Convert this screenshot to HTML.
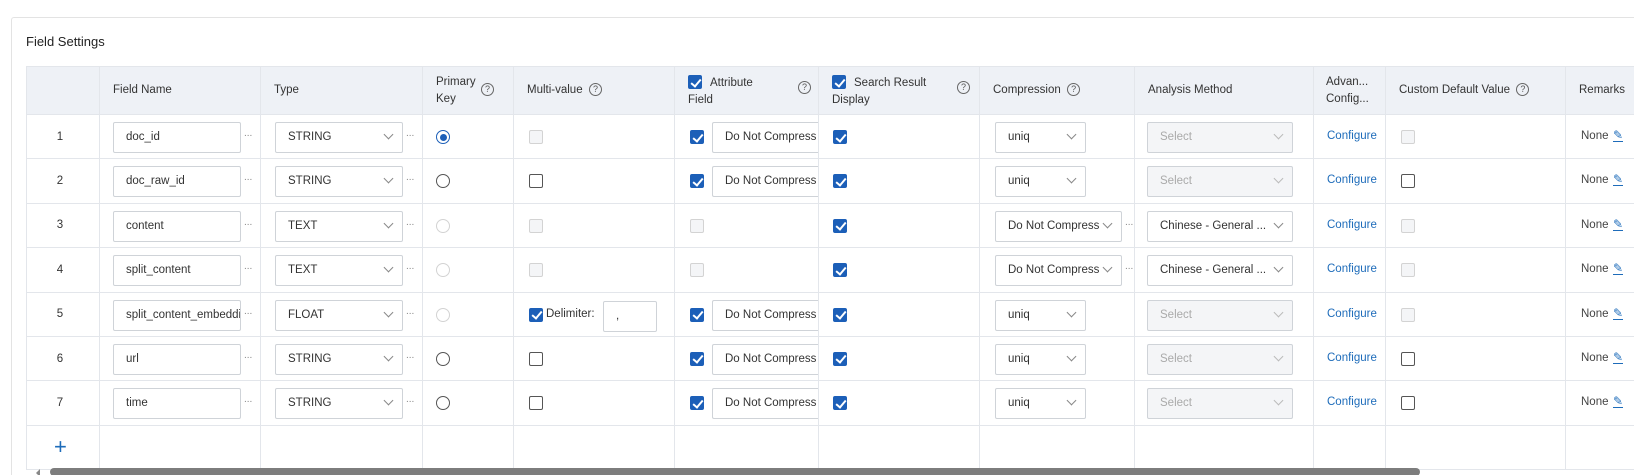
<!DOCTYPE html>
<html style="width:1634px;height:475px;overflow:hidden"><head><meta charset="utf-8"><style>
*{box-sizing:border-box;margin:0;padding:0}
body{width:1634px;height:475px;overflow:hidden;background:#fff;font-family:"Liberation Sans",sans-serif;font-size:11.5px;color:#333;position:relative}
.card{position:absolute;left:11px;top:17px;width:1640px;height:458px;border:1px solid #e3e3e3;border-bottom:none;border-radius:3px 0 0 0}
.title{position:absolute;left:26px;top:34px;font-size:13px;color:#222}
table{position:absolute;left:26px;top:66px;border-collapse:collapse;table-layout:fixed;width:1620px}
td,th{border:1px solid #e3e6eb;padding:0;position:relative;vertical-align:middle;font-weight:normal;text-align:left;overflow:hidden}
th{background:#eef1f6;height:48px;padding-left:13px;line-height:17px;color:#333}
td{height:44.4px}
.n{text-align:center;padding-right:6px}
.inp{position:absolute;top:7px;height:31px;border:1px solid #cfd3d8;border-radius:2px;background:#fff;padding-left:12px;line-height:29px;white-space:nowrap;overflow:hidden}
.dis{background:#f4f5f7;color:#aaa}
.chev{position:absolute;right:10px;top:8px;width:7px;height:7px;border-right:1px solid #888;border-bottom:1px solid #888;transform:rotate(45deg)}
.dis .chev{border-color:#bbb}
.dots{position:absolute;top:13px;color:#888;font-size:10px}
.cb{position:absolute;top:15px;width:14px;height:14px;border:1px solid #555;border-radius:2px;background:#fff}
.cb.d{border-color:#d3d3d3;background:#f4f5f7}
.cb.c{background:#1c5fb8;border-color:#1c5fb8}
.cb.c:after{content:"";position:absolute;left:3.5px;top:0.5px;width:4px;height:8px;border-right:2px solid #fff;border-bottom:2px solid #fff;transform:rotate(40deg)}
.rd{position:absolute;top:15px;width:14px;height:14px;border:1px solid #555;border-radius:50%}
.rd.d{border-color:#d3d3d3}
.rd.c{border-color:#1c5fb8}
.rd.c:after{content:"";position:absolute;left:2.5px;top:2.5px;width:7px;height:7px;border-radius:50%;background:#1c5fb8}
.q{display:inline-block;width:13px;height:13px;border:1px solid #666;border-radius:50%;font-size:9px;line-height:11px;text-align:center;color:#555;vertical-align:middle}
.lnk{position:absolute;left:13px;top:15px;color:#1e6cba}
.none{position:absolute;left:15px;top:15px;color:#444}
.pen{position:absolute;left:47px;top:14px;color:#1e6cba;font-size:12px;border-bottom:1px solid #1e6cba;line-height:12px}
.hcb{position:relative;display:inline-block;top:3px;margin-right:8px;width:14px;height:14px}
.ai{left:37px;width:110px;border-right:none}
</style></head><body>
<div class="card"></div>
<div class="title">Field Settings</div>
<table>
<colgroup><col style="width:73px"><col style="width:161px"><col style="width:162px"><col style="width:91px"><col style="width:161px"><col style="width:144px"><col style="width:161px"><col style="width:155px"><col style="width:179px"><col style="width:72px"><col style="width:180px"><col style="width:81px"></colgroup>
<tr><th></th><th>Field Name</th><th>Type</th>
<th><div style="position:relative">Primary<br>Key<span class="q" style="position:absolute;left:45px;top:9px">?</span></div></th>
<th>Multi-value &nbsp;<span class="q">?</span></th>
<th><div style="position:relative"><span class="cb c hcb"></span>Attribute<br>Field<span class="q" style="position:absolute;left:110px;top:9px">?</span></div></th>
<th><div style="position:relative"><span class="cb c hcb"></span>Search Result<br>Display<span class="q" style="position:absolute;left:125px;top:9px">?</span></div></th>
<th>Compression &nbsp;<span class="q">?</span></th>
<th>Analysis Method</th>
<th style="padding-left:12px">Advan...<br>Config...</th>
<th>Custom Default Value &nbsp;<span class="q">?</span></th>
<th>Remarks</th></tr>

<tr><td class="n">1</td><td><div class="inp" style="left:13px;width:128px">doc_id</div><span class="dots" style="left:144px">...</span></td><td><div class="inp" style="left:14px;width:128px">STRING<i class="chev"></i></div><span class="dots" style="left:145px">...</span></td><td><span class="rd c" style="left:13px"></span></td><td><span class="cb d" style="left:15px"></span></td><td><span class="cb c" style="left:15px"></span><div class="inp ai">Do Not Compress</div></td><td><span class="cb c" style="left:14px"></span></td><td><div class="inp" style="left:15px;width:91px">uniq<i class="chev"></i></div></td><td><div class="inp dis" style="left:12px;width:146px">Select<i class="chev"></i></div></td><td><span class="lnk">Configure</span></td><td><span class="cb d" style="left:15px"></span></td><td><span class="none">None</span><span class="pen">✎</span></td></tr>

<tr><td class="n">2</td><td><div class="inp" style="left:13px;width:128px">doc_raw_id</div><span class="dots" style="left:144px">...</span></td><td><div class="inp" style="left:14px;width:128px">STRING<i class="chev"></i></div><span class="dots" style="left:145px">...</span></td><td><span class="rd" style="left:13px"></span></td><td><span class="cb" style="left:15px"></span></td><td><span class="cb c" style="left:15px"></span><div class="inp ai">Do Not Compress</div></td><td><span class="cb c" style="left:14px"></span></td><td><div class="inp" style="left:15px;width:91px">uniq<i class="chev"></i></div></td><td><div class="inp dis" style="left:12px;width:146px">Select<i class="chev"></i></div></td><td><span class="lnk">Configure</span></td><td><span class="cb" style="left:15px"></span></td><td><span class="none">None</span><span class="pen">✎</span></td></tr>

<tr><td class="n">3</td><td><div class="inp" style="left:13px;width:128px">content</div><span class="dots" style="left:144px">...</span></td><td><div class="inp" style="left:14px;width:128px">TEXT<i class="chev"></i></div><span class="dots" style="left:145px">...</span></td><td><span class="rd d" style="left:13px"></span></td><td><span class="cb d" style="left:15px"></span></td><td><span class="cb d" style="left:15px"></span></td><td><span class="cb c" style="left:14px"></span></td><td><div class="inp" style="left:15px;width:127px">Do Not Compress<i class="chev"></i></div><span class="dots" style="left:145px">...</span></td><td><div class="inp" style="left:12px;width:146px">Chinese - General ...<i class="chev"></i></div></td><td><span class="lnk">Configure</span></td><td><span class="cb d" style="left:15px"></span></td><td><span class="none">None</span><span class="pen">✎</span></td></tr>

<tr><td class="n">4</td><td><div class="inp" style="left:13px;width:128px">split_content</div><span class="dots" style="left:144px">...</span></td><td><div class="inp" style="left:14px;width:128px">TEXT<i class="chev"></i></div><span class="dots" style="left:145px">...</span></td><td><span class="rd d" style="left:13px"></span></td><td><span class="cb d" style="left:15px"></span></td><td><span class="cb d" style="left:15px"></span></td><td><span class="cb c" style="left:14px"></span></td><td><div class="inp" style="left:15px;width:127px">Do Not Compress<i class="chev"></i></div><span class="dots" style="left:145px">...</span></td><td><div class="inp" style="left:12px;width:146px">Chinese - General ...<i class="chev"></i></div></td><td><span class="lnk">Configure</span></td><td><span class="cb d" style="left:15px"></span></td><td><span class="none">None</span><span class="pen">✎</span></td></tr>

<tr><td class="n">5</td><td><div class="inp" style="left:13px;width:128px">split_content_embedding</div><span class="dots" style="left:144px">...</span></td><td><div class="inp" style="left:14px;width:128px">FLOAT<i class="chev"></i></div><span class="dots" style="left:145px">...</span></td><td><span class="rd d" style="left:13px"></span></td><td><span class="cb c" style="left:15px"></span><span style="position:absolute;left:32px;top:15px">Delimiter:</span><div class="inp" style="left:89px;width:54px;top:8px">,</div></td><td><span class="cb c" style="left:15px"></span><div class="inp ai">Do Not Compress</div></td><td><span class="cb c" style="left:14px"></span></td><td><div class="inp" style="left:15px;width:91px">uniq<i class="chev"></i></div></td><td><div class="inp dis" style="left:12px;width:146px">Select<i class="chev"></i></div></td><td><span class="lnk">Configure</span></td><td><span class="cb d" style="left:15px"></span></td><td><span class="none">None</span><span class="pen">✎</span></td></tr>

<tr><td class="n">6</td><td><div class="inp" style="left:13px;width:128px">url</div><span class="dots" style="left:144px">...</span></td><td><div class="inp" style="left:14px;width:128px">STRING<i class="chev"></i></div><span class="dots" style="left:145px">...</span></td><td><span class="rd" style="left:13px"></span></td><td><span class="cb" style="left:15px"></span></td><td><span class="cb c" style="left:15px"></span><div class="inp ai">Do Not Compress</div></td><td><span class="cb c" style="left:14px"></span></td><td><div class="inp" style="left:15px;width:91px">uniq<i class="chev"></i></div></td><td><div class="inp dis" style="left:12px;width:146px">Select<i class="chev"></i></div></td><td><span class="lnk">Configure</span></td><td><span class="cb" style="left:15px"></span></td><td><span class="none">None</span><span class="pen">✎</span></td></tr>

<tr><td class="n">7</td><td><div class="inp" style="left:13px;width:128px">time</div><span class="dots" style="left:144px">...</span></td><td><div class="inp" style="left:14px;width:128px">STRING<i class="chev"></i></div><span class="dots" style="left:145px">...</span></td><td><span class="rd" style="left:13px"></span></td><td><span class="cb" style="left:15px"></span></td><td><span class="cb c" style="left:15px"></span><div class="inp ai">Do Not Compress</div></td><td><span class="cb c" style="left:14px"></span></td><td><div class="inp" style="left:15px;width:91px">uniq<i class="chev"></i></div></td><td><div class="inp dis" style="left:12px;width:146px">Select<i class="chev"></i></div></td><td><span class="lnk">Configure</span></td><td><span class="cb" style="left:15px"></span></td><td><span class="none">None</span><span class="pen">✎</span></td></tr>

<tr><td style="height:44px"><span style="position:absolute;left:27px;top:8px;color:#1e6cba;font-size:22px;font-weight:300">+</span></td><td></td><td></td><td></td><td></td><td></td><td></td><td></td><td></td><td></td><td></td><td></td></tr>
</table>
<div style="position:absolute;left:50px;top:468px;width:1370px;height:8px;background:#7d7d7d;border-radius:4px"></div>
<div style="position:absolute;left:36px;top:469px;width:0;height:0;border-top:4px solid transparent;border-bottom:4px solid transparent;border-right:4px solid #888"></div>
</body></html>
